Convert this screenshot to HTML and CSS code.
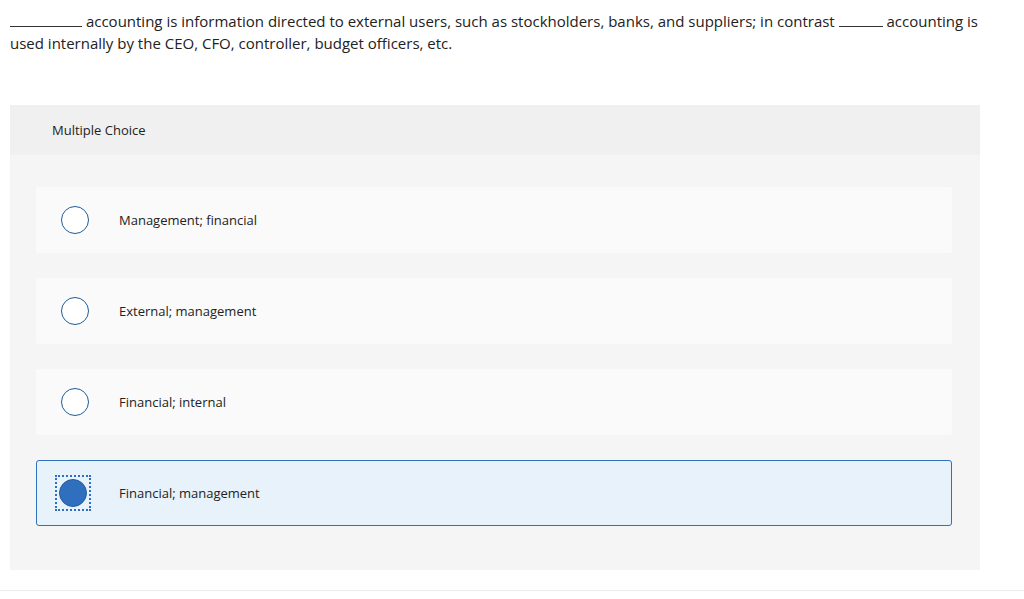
FILE: index.html
```html
<!DOCTYPE html>
<html>
<head>
<meta charset="utf-8">
<link rel="stylesheet" href="styles.css">
</head>
<body>
<div class="page">
  <p class="question"><span class="blank blank-long"></span> accounting is information directed to external users, such as stockholders, banks, and suppliers; in contrast <span class="blank blank-short"></span> accounting is used internally by the CEO, CFO, controller, budget officers, etc.</p>
  <section class="mc">
    <div class="mc-header">Multiple Choice</div>
    <div class="mc-body">
      <label class="option"><span class="radio"></span><span class="option-text">Management; financial</span></label>
      <label class="option"><span class="radio"></span><span class="option-text">External; management</span></label>
      <label class="option"><span class="radio"></span><span class="option-text">Financial; internal</span></label>
      <label class="option selected"><span class="focus"><span class="radio checked"></span></span><span class="option-text">Financial; management</span></label>
    </div>
  </section>
</div>
<div class="bottom-rule"></div>
</body>
</html>
```
FILE: styles.css
```css
html, body {
  margin: 0;
  padding: 0;
  background: #ffffff;
}
body {
  font-family: "Open Sans", "Liberation Sans", sans-serif;
  color: #222;
}
.page {
  width: 970px;
  padding: 10px 0 0 10px;
}
.question {
  margin: 0;
  width: 975px;
  font-size: 15px;
  line-height: 22px;
  color: #222;
}
.blank {
  display: inline-block;
  border-bottom: 1px solid #333;
  vertical-align: baseline;
  height: 1px;
}
.blank-long { width: 72px; }
.blank-short { width: 44px; }
.mc {
  margin-top: 51px;
  background: #f5f5f5;
  height: 465px;
}
.mc-header {
  background: #f0f0f0;
  height: 50px;
  display: flex;
  align-items: center;
  padding-left: 42px;
  font-size: 13px;
  color: #222;
}
.mc-body {
  padding: 32px 28px 0 26px;
  display: flex;
  flex-direction: column;
  gap: 25px;
}
.option {
  height: 66px;
  box-sizing: border-box;
  background: #fafafa;
  display: flex;
  align-items: center;
  padding-left: 25px;
  border-radius: 2px;
  font-size: 13px;
  color: #222;
}
.option.selected {
  background: #e8f2fb;
  border: 1px solid #2f70bf;
  padding-left: 20px;
  border-radius: 3px;
}
.radio {
  width: 28px;
  height: 28px;
  box-sizing: border-box;
  border: 1.5px solid #1f5b96;
  border-radius: 50%;
  background: #fff;
  flex: none;
}
.radio.checked {
  background: #2f6fbd;
  border-color: #245ea0;
}
.focus {
  display: flex;
  padding: 2px;
  outline: 2px dotted #2f6fbd;
  outline-offset: 0;
}
.option-text {
  margin-left: 30px;
}
.selected .option-text {
  margin-left: 30px;
}
.bottom-rule {
  margin-top: 20px;
  height: 1px;
  background: #ececec;
}
```
